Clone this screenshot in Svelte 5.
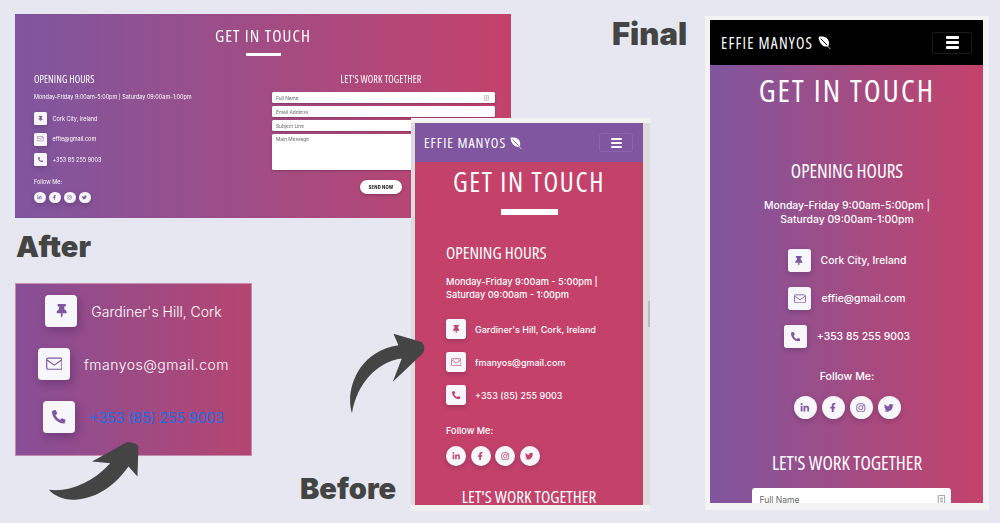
<script>
  const socials = ['in', 'fb', 'ig', 'tw'];
  const panelA = { rows: [['pin', 'Cork City, Ireland'], ['mail', 'effie@gmail.com'], ['phone', '+353 85 255 9003']] };
  const panelB = { rows: [['pin', "Gardiner's Hill, Cork, Ireland"], ['mail', 'fmanyos@gmail.com'], ['phone', '+353 (85) 255 9003']] };
  const paths = {
    pin: ['0 0 384 512', 'M298 214L286 96h42c13 0 24-11 24-24V24c0-13-11-24-24-24H56C43 0 32 11 32 24v48c0 13 11 24 24 24h42L86 214C37 237 0 277 0 328c0 13 11 24 24 24h136v104c0 1 .3 2.5.8 3.6l24 48c3 6 11.4 6 14.3 0l24-48c.6-1.100.9-2.300.9-3.600V352h136c13 0 24-11 24-24 0-51-38-91-86-114z'],
    phone: ['0 0 512 512', 'M497.39 361.8l-112-48a24 24 0 0 0-28 6.9l-49.6 60.6A370.66 370.66 0 0 1 130.6 204.11l60.6-49.6a23.94 23.94 0 0 0 6.9-28l-48-112A24.16 24.16 0 0 0 122.6.61l-104 24A24 24 0 0 0 0 48c0 256.5 207.9 464 464 464a24 24 0 0 0 23.4-18.6l24-104a24.29 24.29 0 0 0-14.01-27.6z'],
    in: ['0 0 448 512', 'M100.28 448H7.4V148.9h92.88zM53.79 108.1C24.09 108.1 0 83.5 0 53.8a53.79 53.79 0 0 1 107.58 0c0 29.7-24.1 54.3-53.79 54.3zM447.9 448h-92.68V302.4c0-34.7-.7-79.2-48.29-79.2-48.29 0-55.69 37.7-55.69 76.7V448h-92.78V148.9h89.08v40.8h1.3c12.4-23.5 42.69-48.3 87.88-48.3 94 0 111.28 61.9 111.28 142.3V448z'],
    fb: ['0 0 320 512', 'M279.14 288l14.22-92.66h-88.91v-60.13c0-25.35 12.42-50.06 52.24-50.06h40.42V6.26S260.43 0 225.36 0c-73.22 0-121.08 44.38-121.08 124.72v70.62H22.89V288h81.39v224h100.17V288z'],
    tw: ['0 0 512 512', 'M459.37 151.716c.325 4.548.325 9.097.325 13.645 0 138.72-105.583 298.558-298.558 298.558-59.452 0-114.68-17.219-161.137-47.106 8.447.974 16.568 1.299 25.34 1.299 49.055 0 94.213-16.568 130.274-44.832-46.132-.975-84.792-31.188-98.112-72.772 6.498.974 12.995 1.624 19.818 1.624 9.421 0 18.843-1.3 27.614-3.573-48.081-9.747-84.143-51.98-84.143-102.985v-1.299c13.969 7.797 30.214 12.67 47.431 13.319-28.264-18.843-46.781-51.005-46.781-87.391 0-19.492 5.197-37.36 14.294-52.954 51.655 63.675 129.3 105.258 216.365 109.807-1.624-7.797-2.599-15.918-2.599-24.04 0-57.828 46.782-104.934 104.934-104.934 30.213 0 57.502 12.67 76.67 33.137 23.715-4.548 46.456-13.32 66.599-25.34-7.798 24.366-24.366 44.833-46.132 57.827 21.117-2.273 41.584-8.122 60.426-16.243-14.292 20.791-32.161 39.308-52.628 54.253z']
  };
</script>

{#snippet icon(name)}
  {#if name === 'mail'}
    <svg class="glyph wide" viewBox="0 0 24 18" fill="none" stroke="currentColor" stroke-width="1.7"><rect x="1" y="1" width="22" height="16" rx="2" /><path d="M1.500 3.500L12 11l10.500-7.500" /></svg>
  {:else if name === 'ig'}
    <svg class="glyph" viewBox="0 0 24 24" fill="none" stroke="currentColor" stroke-width="2.200"><rect x="2" y="2" width="20" height="20" rx="6" /><circle cx="12" cy="12" r="5" /><circle cx="18" cy="6" r=".8" /></svg>
  {:else}
    <svg class="glyph" viewBox={paths[name][0]} fill="currentColor"><path d={paths[name][1]} /></svg>
  {/if}
{/snippet}

{#snippet contactRow(name, text)}
  <div class="row">
    <span class="box">{@render icon(name)}</span>
    <span>{text}</span>
  </div>
{/snippet}

{#snippet follow()}
  <p class="follow">Follow Me:</p>
  <div class="socials">
    {#each socials as s}
      <span class="circle">{@render icon(s)}</span>
    {/each}
  </div>
{/snippet}

{#snippet nav()}
  <header class="nav">
    <span class="brand">EFFIE MANYOS</span>
    <svg class="leaf" viewBox="0 0 20 20"><path d="M1 1c8-1 15 1 16 9 .4 3-.6 5-2 6C8 18 1 10 1 1z" fill="#fff" /><path d="M14 15l5 5" stroke="#fff" stroke-width="1.200" /><path d="M4 4l10 10" stroke="currentColor" stroke-width="1.500" /></svg>
    <span class="toggler"><i></i><i></i><i></i></span>
  </header>
{/snippet}

<main class="page">
  <h2 class="label after-label">After</h2>
  <h2 class="label before-label">Before</h2>
  <h2 class="label final-label">Final</h2>

  <section class="panel desktop">
    <h1>GET IN TOUCH</h1>
    <div class="bar"></div>
    <div class="cols">
      <div>
        <h3>OPENING HOURS</h3>
        <p class="hours">Monday-Friday 9:00am-5:00pm | Saturday 09:00am-1:00pm</p>
        <div class="rows">
          {#each panelA.rows as r}
            {@render contactRow(r[0], r[1])}
          {/each}
        </div>
        {@render follow()}
      </div>
      <form>
        <h3 class="work">LET'S WORK TOGETHER</h3>
        <div class="field">
          <input placeholder="Full Name" />
          <svg class="card" viewBox="0 0 12 14" fill="none" stroke="#777"><rect x="1.500" y=".5" width="9" height="13" rx="1" /><path d="M4 4.500h4M4 7h4M4 9.500h4" /></svg>
        </div>
        <input placeholder="Email Address" />
        <input placeholder="Subject Line" />
        <textarea placeholder="Main Message"></textarea>
        <button type="button">SEND NOW</button>
      </form>
    </div>
  </section>

  <section class="panel after">
    <div class="row"><span class="box">{@render icon('pin')}</span><span>Gardiner's Hill, Cork</span></div>
    <div class="row"><span class="box">{@render icon('mail')}</span><span class="email">fmanyos@gmail.com</span></div>
    <div class="row"><span class="box">{@render icon('phone')}</span><span class="tel">+353 (85) 255 9003</span></div>
  </section>

  <section class="frame before">
    <div class="screen">
      {@render nav()}
      <div class="scroll">
        <h1>GET IN TOUCH</h1>
        <div class="bar"></div>
        <div class="content">
          <h3>OPENING HOURS</h3>
          <p class="hours">Monday-Friday 9:00am - 5:00pm |<br />Saturday 09:00am - 1:00pm</p>
          <div class="rows">
            {#each panelB.rows as r}
              {@render contactRow(r[0], r[1])}
            {/each}
          </div>
          {@render follow()}
        </div>
        <h3 class="work">LET'S WORK TOGETHER</h3>
      </div>
    </div>
    <span class="thumb"></span>
  </section>

  <section class="frame final">
    <div class="screen">
      {@render nav()}
      <div class="scroll">
        <h1>GET IN TOUCH</h1>
        <div class="bar"></div>
        <h3>OPENING HOURS</h3>
        <p class="hours">Monday-Friday 9:00am-5:00pm |<br />Saturday 09:00am-1:00pm</p>
        <div class="rows">
          {#each panelA.rows as r}
            {@render contactRow(r[0], r[1])}
          {/each}
        </div>
        {@render follow()}
        <h3 class="work">LET'S WORK TOGETHER</h3>
        <div class="field">
          <input placeholder="Full Name" />
          <svg class="card" viewBox="0 0 12 14" fill="none" stroke="#777"><rect x="1.500" y=".5" width="9" height="13" rx="1" /><path d="M4 4.500h4M4 7h4M4 9.500h4" /></svg>
        </div>
      </div>
    </div>
  </section>

  <svg class="arrow arrow-after" viewBox="140 645 285 190"><path d="M145 795c60 8 130-20 185-80l-55-5 105-58c15-2 35 5 35 15l-3 88-27-30c-40 55-90 95-160 100-35 2-65-12-80-30z" /></svg>
  <svg class="arrow arrow-before" viewBox="140 665 235 250"><path d="M155 910c-20-60 10-185 140-205l-15-35 85 25c10 10 10 25 3 35l-90 85 27-70c-75 10-135 75-150 165z" /></svg>
</main>

<style>
  :global(body) {
    background: #e6e7f0;
    overflow: hidden;
  }

  .page {
    position: relative;
    width: 1000px;
    height: 523px;
    overflow: hidden;
    font-family: "Inter", "Noto Sans", sans-serif;
    color: #fff;
  }

  h1, h2, h3, p {
    margin: 0;
    font-weight: 400;
  }

  h1, h3, .brand {
    font-family: "Open Sans", "Noto Sans", sans-serif;
    font-stretch: 75%;
    font-weight: 400;
    white-space: nowrap;
  }

  .label {
    position: absolute;
    font-family: "Inter", sans-serif;
    font-weight: 900;
    color: #444;
    line-height: 1;
  }
  .after-label { left: 16px; top: 232px; font-size: 29px; }
  .before-label { left: 300px; top: 474px; font-size: 29px; }
  .final-label { left: 612px; top: 18px; font-size: 31px; }

  .arrow {
    position: absolute;
    fill: #444;
    z-index: 5;
  }
  .arrow-after { left: 47px; top: 440px; width: 95px; height: 63px; }
  .arrow-before { left: 347px; top: 332px; width: 78px; height: 83px; }

  .panel, .frame {
    position: absolute;
  }

  .bar {
    background: #fff;
  }

  .rows {
    display: flex;
    flex-direction: column;
  }
  .row {
    display: flex;
    align-items: center;
    white-space: nowrap;
  }
  .box, .circle {
    display: flex;
    align-items: center;
    justify-content: center;
    flex: none;
    background: #f6f6fb;
    color: var(--icon, #7f569f);
    box-shadow: 0 2px 5px rgba(40, 20, 60, .25);
  }
  .box { border-radius: 12%; }
  .circle { border-radius: 50%; }
  .glyph {
    width: 42%;
    height: 42%;
  }
  .glyph.wide {
    width: 52%;
  }
  .socials {
    display: flex;
  }

  input, textarea {
    display: block;
    width: 100%;
    box-sizing: border-box;
    border: 0;
    background: #fff;
    font-family: "Inter", sans-serif;
    color: #555;
    resize: none;
    outline: 0;
  }
  input::placeholder, textarea::placeholder {
    color: #666;
    opacity: 1;
  }
  .field {
    position: relative;
  }
  .card {
    position: absolute;
    top: 50%;
    transform: translateY(-50%);
  }

  /* top left desktop shot */
  .desktop {
    left: 15px;
    top: 14px;
    width: 496px;
    height: 204px;
    box-sizing: border-box;
    padding: 12px 16px 0 19px;
    background: linear-gradient(90deg, #7f569f, #c4426a);
    filter: blur(.35px);
  }
  .desktop h1 {
    font-size: 17px;
    line-height: 20px;
    letter-spacing: 1.100px;
    text-align: center;
    margin-left: -19px;
    margin-right: -16px;
  }
  .desktop .bar {
    width: 35px;
    height: 3px;
    margin: 7px auto 0;
    position: relative;
    left: -1.500px;
  }
  .cols {
    display: grid;
    grid-template-columns: 1fr 223px;
    margin-top: 17px;
  }
  .desktop h3 {
    font-size: 10px;
    line-height: 12px;
    letter-spacing: .1px;
  }
  .desktop .hours {
    margin-top: 8px;
    font-size: 5.500px;
    line-height: 8px;
    white-space: nowrap;
  }
  .desktop .rows {
    margin-top: 11px;
    gap: 7.500px;
    font-size: 5.500px;
  }
  .desktop .row { gap: 6px; }
  .desktop .box { width: 12.500px; height: 13px; }
  .desktop .follow {
    margin-top: 11.500px;
    font-size: 5.500px;
    line-height: 8px;
  }
  .desktop .socials {
    margin-top: 6px;
    gap: 3.500px;
  }
  .desktop .circle { width: 11.500px; height: 11.500px; }
  .desktop .work {
    text-align: center;
    padding-right: 5px;
  }
  form {
    display: flex;
    flex-direction: column;
    gap: 3px;
  }
  form .work {
    margin-bottom: 4px;
  }
  .desktop input {
    height: 11px;
    padding: 0 4px;
    font-size: 4.800px;
    border-radius: 1.500px;
    box-shadow: 0 1px 2px rgba(40, 20, 60, .3);
  }
  .desktop .card {
    right: 6px;
    width: 5px;
    height: 6px;
  }
  textarea {
    height: 36px;
    padding: 2px 4px;
    font-size: 4.800px;
    border-radius: 1.500px;
    box-shadow: 0 1px 2px rgba(40, 20, 60, .3);
  }
  button {
    align-self: center;
    position: relative;
    left: -2.500px;
    width: 42px;
    height: 14px;
    margin-top: 7px;
    padding: 0;
    border: 0;
    border-radius: 7px;
    background: #fff;
    color: #222;
    font-family: "Inter", sans-serif;
    font-size: 4.200px;
    font-weight: 800;
    letter-spacing: .2px;
    box-shadow: 0 1px 3px rgba(40, 20, 60, .35);
  }

  /* bottom left after crop */
  .after {
    left: 15px;
    top: 283px;
    width: 237px;
    height: 173px;
    box-sizing: border-box;
    padding-top: 12px;
    display: flex;
    flex-direction: column;
    align-items: center;
    gap: 21px;
    background: linear-gradient(90deg, #874f98, #b5456f);
    outline: 1px solid #c88bb0;
    outline-offset: -1px;
    font-size: 14px;
    font-weight: 300;
  }
  .after .row { gap: 14px; }
  .after .box {
    width: 32px;
    height: 32px;
    box-shadow: 2px 4px 8px rgba(50, 20, 70, .3);
  }
  .after .email { letter-spacing: .5px; }
  .after .tel { color: #1a6fe8; font-weight: 400; }

  /* phone frames */
  .frame {
    box-sizing: border-box;
    background: #f3f3f3;
  }
  .screen {
    height: 100%;
    display: flex;
    flex-direction: column;
  }
  .nav {
    display: flex;
    align-items: center;
    flex: none;
  }
  .brand {
    color: #fff;
  }
  .toggler {
    margin-left: auto;
    display: flex;
    flex-direction: column;
    align-items: center;
    justify-content: center;
    box-sizing: border-box;
    border-radius: 3px;
  }
  .toggler i {
    display: block;
    background: #fff;
    border-radius: 1px;
  }
  .scroll {
    flex: 1;
    min-height: 0;
  }
  .scroll h1, .scroll .work {
    text-align: center;
  }

  .before {
    left: 411px;
    top: 118px;
    width: 239px;
    height: 393px;
    padding: 5px 7px 6px 4px;
    z-index: 2;
    --icon: #c4426a;
    background: linear-gradient(#f3f3f3 5px, #dcdcdc 5px, #dcdcdc 387px, #f0f0f0 387px);
  }
  .before .nav {
    height: 39px;
    padding: 0 10px 0 9px;
    background: #7f569f;
    color: #7f569f;
  }
  .before .brand { font-size: 14px; letter-spacing: 1px; }
  .before .leaf { width: 12px; height: 12px; margin-left: 4px; }
  .before .toggler {
    width: 34px;
    height: 19px;
    gap: 2px;
    border: 1px solid #8d65ac;
  }
  .before .toggler i { width: 11px; height: 2px; }
  .before .scroll {
    background: #c4426a;
  }
  .before h1 {
    margin-top: 6px;
    font-size: 27px;
    line-height: 28px;
    letter-spacing: 1.700px;
  }
  .before .bar {
    width: 57px;
    height: 6px;
    margin: 13px auto 0;
  }
  .before .content {
    padding: 28px 0 0 31px;
  }
  .before h3 {
    font-size: 17px;
    line-height: 20px;
  }
  .before .hours {
    margin-top: 12px;
    font-size: 9.200px;
    font-weight: 500;
    line-height: 13px;
  }
  .before .rows {
    margin-top: 18px;
    gap: 13px;
    font-size: 9px;
    font-weight: 500;
  }
  .before .row { gap: 9px; }
  .before .box { width: 20px; height: 20px; }
  .before .follow {
    margin-top: 20px;
    font-size: 9.200px;
    font-weight: 500;
    line-height: 12px;
  }
  .before .socials {
    margin-top: 9px;
    gap: 4.500px;
  }
  .before .circle { width: 20px; height: 20px; }
  .before h3.work {
    margin-top: 23px;
    font-size: 17px;
    line-height: 16px;
  }
  .thumb {
    position: absolute;
    right: 0;
    top: 183px;
    width: 2px;
    height: 26px;
    background: #bbb;
  }

  .final {
    left: 705px;
    top: 16px;
    width: 284px;
    height: 494px;
    padding: 4px 6px 7px 5px;
  }
  .final .screen {
    overflow: hidden;
  }
  .final .nav {
    height: 45px;
    padding: 0 11px;
    background: #000;
    color: #000;
  }
  .final .brand { font-size: 15.500px; letter-spacing: 1.200px; }
  .final .leaf { width: 13px; height: 13px; margin-left: 5px; }
  .final .toggler {
    width: 40px;
    height: 22px;
    gap: 2.500px;
    border: 1px solid #1c1c1c;
  }
  .final .toggler i { width: 13px; height: 2.500px; }
  .final .scroll {
    display: flex;
    flex-direction: column;
    align-items: center;
    padding-left: 1px;
    overflow: hidden;
    background: linear-gradient(90deg, #7f569f, #c4426a);
  }
  .final h1 {
    margin-top: 8px;
    font-size: 31px;
    line-height: 34px;
    letter-spacing: 2.100px;
  }
  .final .bar {
    width: 66px;
    height: 6px;
    margin-top: 15px;
  }
  .final h3 {
    margin-top: 38px;
    font-size: 19px;
    line-height: 22px;
  }
  .final .hours {
    margin-top: 17px;
    font-size: 10.400px;
    font-weight: 500;
    line-height: 14px;
    text-align: center;
  }
  .final .rows {
    margin-top: 22px;
    gap: 15px;
    align-items: center;
    font-size: 10.400px;
    font-weight: 500;
  }
  .final .row { gap: 10px; }
  .final .box { width: 23px; height: 23px; }
  .final .follow {
    margin-top: 22px;
    font-size: 10.600px;
    font-weight: 500;
    line-height: 14px;
  }
  .final .socials {
    margin-top: 12px;
    gap: 5px;
  }
  .final .circle { width: 23px; height: 23px; }
  .final h3.work {
    margin-top: 33px;
  }
  .final .field {
    width: 199px;
    margin: 14px 0 0 8px;
    flex: none;
  }
  .final input {
    height: 24px;
    padding: 0 8px;
    font-size: 8.500px;
    border-radius: 3px;
  }
  .final .card {
    right: 5px;
    width: 9px;
    height: 10px;
  }
</style>
